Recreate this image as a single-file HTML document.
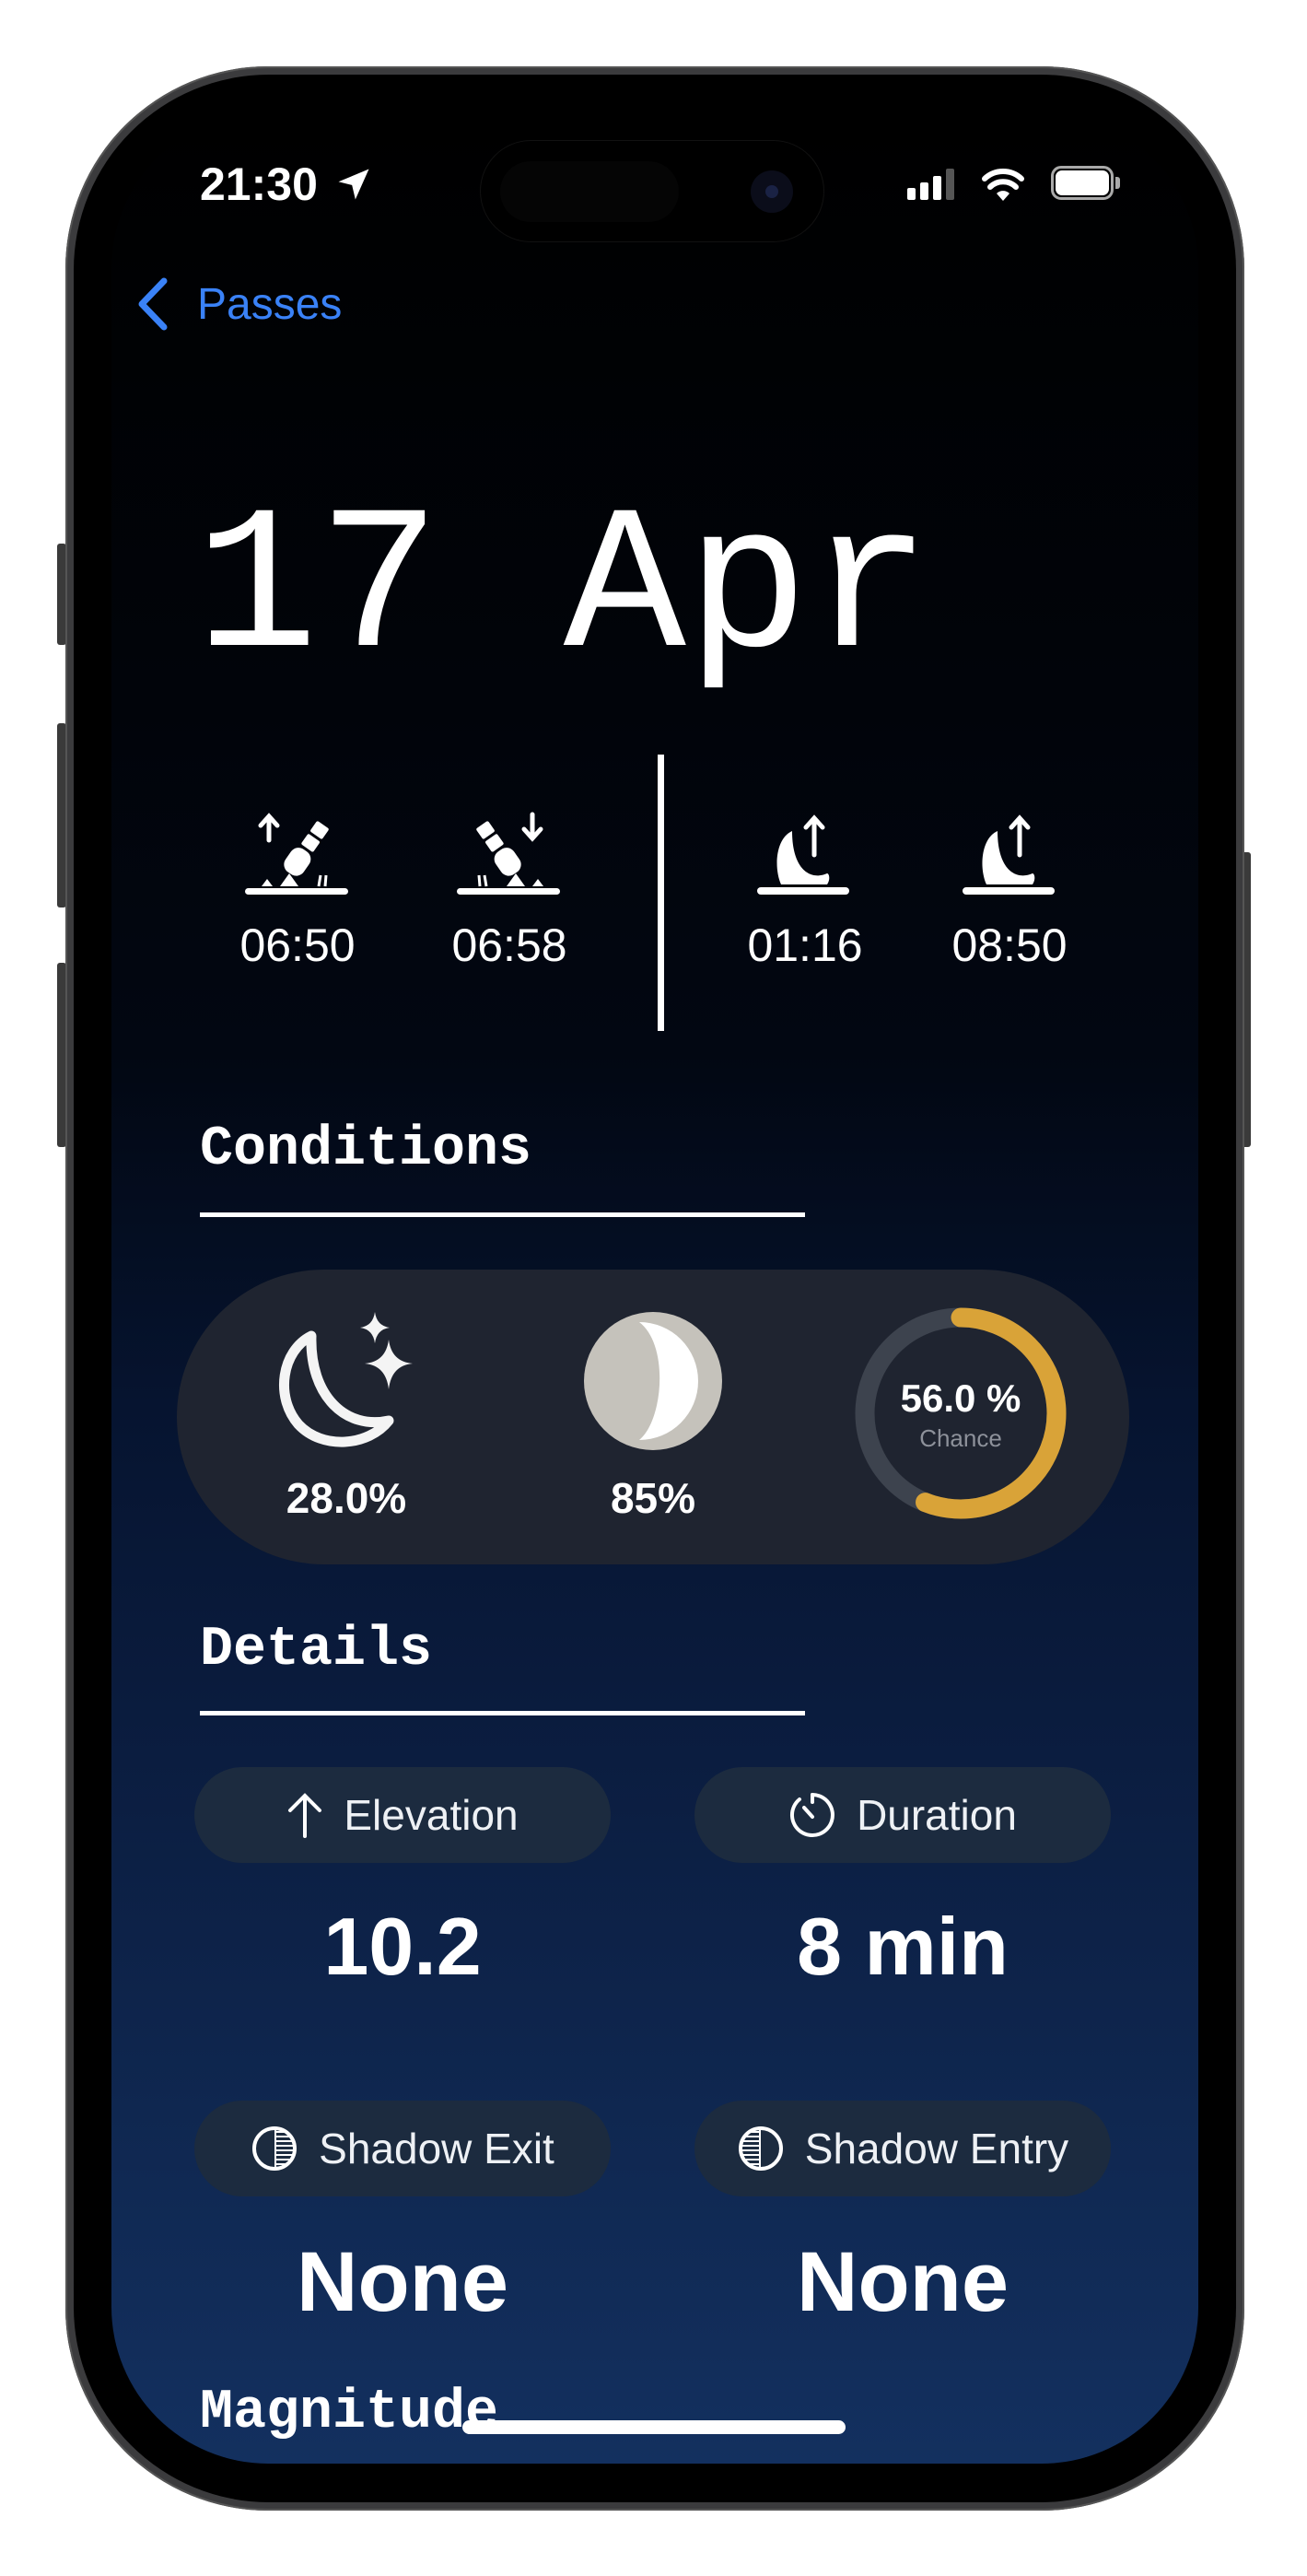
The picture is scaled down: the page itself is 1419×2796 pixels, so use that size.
<!DOCTYPE html>
<html><head><meta charset="utf-8">
<style>
*{margin:0;padding:0;box-sizing:border-box}
html,body{width:1419px;height:2796px;background:#fff;overflow:hidden;position:relative;font-family:"Liberation Sans",sans-serif}
.abs{position:absolute}
.frame{left:71px;top:72px;width:1280px;height:2653px;border-radius:220px;background:#3b3b3d;box-shadow:inset 0 0 0 2px #555}
.bezel{left:80px;top:81px;width:1262px;height:2635px;border-radius:212px;background:#000}
.screen{left:121px;top:121px;width:1180px;height:2553px;border-radius:170px;overflow:hidden;
background:linear-gradient(180deg,#000 0%,#01040a 25%,#020712 40%,#061430 55%,#0b1d40 70%,#0f2750 85%,#13305f 100%)}
.t{position:absolute;color:#fff;white-space:nowrap;line-height:1}
.mono{font-family:"Liberation Mono",monospace}
.ctr{transform:translateX(-50%);text-align:center}
.pill{position:absolute;width:452px;height:104px;border-radius:52px;background:#1c2b3f;display:flex;align-items:center;justify-content:center;gap:22px;color:#eef1f5;font-size:46px}
.line{position:absolute;background:#fff}
</style></head><body>
<div class="abs" style="left:62px;top:590px;width:10px;height:110px;background:#3a3a3a;border-radius:3px"></div>
<div class="abs" style="left:62px;top:785px;width:10px;height:200px;background:#3a3a3a;border-radius:3px"></div>
<div class="abs" style="left:62px;top:1045px;width:10px;height:200px;background:#3a3a3a;border-radius:3px"></div>
<div class="abs" style="left:1348px;top:925px;width:10px;height:320px;background:#3a3a3a;border-radius:3px"></div>
<div class="abs frame"></div>
<div class="abs bezel"></div>
<div class="abs screen"></div>

<div class="t" style="left:217px;top:175px;font-size:50px;font-weight:bold">21:30</div>
<svg class="abs" style="left:362px;top:178px" width="44" height="44" viewBox="0 0 24 24"><path d="M21 3 L3 10.5 L11 12.5 L13 21 Z" fill="#fff"/></svg>
<div class="abs" style="left:522px;top:153px;width:372px;height:109px;border-radius:55px;background:#000;box-shadow:0 0 0 1px #111"></div>
<div class="abs" style="left:543px;top:175px;width:194px;height:66px;border-radius:33px;background:#050505"></div>
<div class="abs" style="left:815px;top:185px;width:46px;height:46px;border-radius:23px;background:#0b0d1a"></div>
<div class="abs" style="left:831px;top:201px;width:14px;height:14px;border-radius:7px;background:#1a2244"></div>
<div class="abs" style="left:985px;top:204px;width:9px;height:13px;background:#fff;border-radius:2px"></div>
<div class="abs" style="left:999px;top:198px;width:9px;height:19px;background:#fff;border-radius:2px"></div>
<div class="abs" style="left:1013px;top:191px;width:9px;height:26px;background:#fff;border-radius:2px"></div>
<div class="abs" style="left:1027px;top:183px;width:9px;height:34px;background:#555;border-radius:2px"></div>
<svg class="abs" style="left:1066px;top:180px" width="46" height="40" viewBox="0 0 46 40"><path d="M23 38 L30 30 A10 10 0 0 0 16 30 Z" fill="#fff"/><path d="M9 23 A20 20 0 0 1 37 23" stroke="#fff" stroke-width="6" fill="none" stroke-linecap="round"/><path d="M3 14 A29 29 0 0 1 43 14" stroke="#fff" stroke-width="6" fill="none" stroke-linecap="round"/></svg>
<div class="abs" style="left:1141px;top:180px;width:68px;height:37px;border:3px solid #aaa;border-radius:11px"></div>
<div class="abs" style="left:1146px;top:185px;width:58px;height:27px;background:#fff;border-radius:7px"></div>
<div class="abs" style="left:1211px;top:192px;width:5px;height:13px;background:#aaa;border-radius:0 3px 3px 0"></div>

<svg class="abs" style="left:146px;top:301px" width="40" height="58" viewBox="0 0 40 58"><path d="M32 4 L8 29 L32 54" stroke="#3a82f7" stroke-width="7" fill="none" stroke-linecap="round" stroke-linejoin="round"/></svg>
<div class="t" style="left:214px;top:307px;font-size:48px;color:#3a82f7">Passes</div>

<div class="t mono" style="left:212px;top:530px;font-size:222px">17 Apr</div>

<svg class="abs" style="left:262px;top:880px" width="120" height="92" viewBox="0 0 120 92">
<path d="M30 6 L30 32 M21 16 L30 6 L39 16" stroke="#fff" stroke-width="5" fill="none" stroke-linecap="round"/>
<g transform="rotate(35 66 48)" fill="#fff"><rect x="58" y="8" width="16" height="14" rx="2"/><rect x="58" y="25" width="16" height="14" rx="2"/><rect x="54" y="42" width="24" height="30" rx="10"/></g>
<path d="M42 82 L52 68 L62 82 Z M22 82 L28 74 L34 82 Z" fill="#fff"/>
<path d="M86 70 L84 82 M92 70 L91 82" stroke="#fff" stroke-width="3"/>
<rect x="4" y="84" width="112" height="7" rx="3.5" fill="#fff"/></svg>
<svg class="abs" style="left:492px;top:880px" width="120" height="92" viewBox="0 0 120 92">
<path d="M86 4 L86 30 M77 20 L86 30 L95 20" stroke="#fff" stroke-width="5" fill="none" stroke-linecap="round"/>
<g transform="rotate(-35 54 48)" fill="#fff"><rect x="46" y="8" width="16" height="14" rx="2"/><rect x="46" y="25" width="16" height="14" rx="2"/><rect x="42" y="42" width="24" height="30" rx="10"/></g>
<path d="M58 82 L68 68 L78 82 Z M86 82 L92 74 L98 82 Z" fill="#fff"/>
<path d="M34 70 L36 82 M28 70 L29 82" stroke="#fff" stroke-width="3"/>
<rect x="4" y="84" width="112" height="7" rx="3.5" fill="#fff"/></svg>
<svg class="abs" style="left:820px;top:880px" width="104" height="92" viewBox="0 0 104 92">
<path d="M64 8 L64 48 M55 18 L64 8 L73 18" stroke="#fff" stroke-width="5" fill="none" stroke-linecap="round"/>
<path d="M40 22 C22 30 20 62 28 80 L78 80 C82 74 80 68 78 68 C60 76 40 64 40 22 Z" fill="#fff"/>
<rect x="2" y="83" width="100" height="8" rx="4" fill="#fff"/></svg>
<svg class="abs" style="left:1043px;top:880px" width="104" height="92" viewBox="0 0 104 92">
<path d="M64 8 L64 48 M55 18 L64 8 L73 18" stroke="#fff" stroke-width="5" fill="none" stroke-linecap="round"/>
<path d="M40 22 C22 30 20 62 28 80 L78 80 C82 74 80 68 78 68 C60 76 40 64 40 22 Z" fill="#fff"/>
<rect x="2" y="83" width="100" height="8" rx="4" fill="#fff"/></svg>
<div class="t ctr" style="left:323px;top:1001px;font-size:50px">06:50</div>
<div class="t ctr" style="left:553px;top:1001px;font-size:50px">06:58</div>
<div class="t ctr" style="left:874px;top:1001px;font-size:50px">01:16</div>
<div class="t ctr" style="left:1096px;top:1001px;font-size:50px">08:50</div>
<div class="line" style="left:714px;top:819px;width:7px;height:300px"></div>

<div class="t mono" style="left:217px;top:1218px;font-size:60px;font-weight:bold">Conditions</div>
<div class="line" style="left:217px;top:1316px;width:657px;height:5px"></div>
<div class="abs" style="left:192px;top:1378px;width:1034px;height:320px;border-radius:160px;background:#1f2430"></div>
<svg class="abs" style="left:300px;top:1420px" width="154" height="158" viewBox="0 0 154 158">
<path d="M38 30 C6 46 -2 96 24 126 C50 154 100 150 122 122 C76 132 36 96 38 30 Z" stroke="#f4f4f4" stroke-width="11" fill="none" stroke-linejoin="round"/>
<path d="M107 4 Q109 19 123 21 Q109 23 107 38 Q105 23 91 21 Q105 19 107 4 Z" fill="#f4f4f4"/>
<path d="M122 34 Q125 58 148 60 Q125 62 122 88 Q119 62 96 60 Q119 58 122 34 Z" fill="#f4f4f4"/>
</svg>
<div class="t ctr" style="left:376px;top:1603px;font-size:46px;font-weight:bold">28.0%</div>
<svg class="abs" style="left:632px;top:1422px" width="154" height="154" viewBox="0 0 154 154">
<circle cx="77" cy="77" r="75" fill="#c5c2bb"/>
<path d="M62 13 A64 64 0 0 1 62 141 C88 120 95 38 62 13 Z" fill="#fff"/>
</svg>
<div class="t ctr" style="left:709px;top:1603px;font-size:46px;font-weight:bold">85%</div>
<svg class="abs" style="left:923px;top:1414px" width="240" height="240" viewBox="0 0 240 240">
<circle cx="120" cy="120" r="104" stroke="#3d434e" stroke-width="21" fill="none"/>
<circle cx="120" cy="120" r="104" stroke="#d9a338" stroke-width="21" fill="none" stroke-linecap="round" stroke-dasharray="366 1000" transform="rotate(-90 120 120)"/>
</svg>
<div class="t ctr" style="left:1043px;top:1497px;font-size:42px;font-weight:bold">56.0 %</div>
<div class="t ctr" style="left:1043px;top:1548px;font-size:26px;color:#8d919a">Chance</div>

<div class="t mono" style="left:217px;top:1761px;font-size:60px;font-weight:bold">Details</div>
<div class="line" style="left:217px;top:1857px;width:657px;height:5px"></div>
<div class="pill" style="left:211px;top:1918px"><svg width="40" height="50" viewBox="0 0 40 50"><path d="M20 48 L20 4 M4 20 L20 4 L36 20" stroke="#fff" stroke-width="4" fill="none" stroke-linecap="round"/></svg><span>Elevation</span></div>
<div class="pill" style="left:754px;top:1918px"><svg width="52" height="52" viewBox="0 0 52 52"><path d="M26 4 A22 22 0 1 1 12 9" stroke="#fff" stroke-width="4" fill="none" stroke-linecap="round"/><path d="M26 4 L26 12 M17 18 L26 28" stroke="#fff" stroke-width="4" stroke-linecap="round"/></svg><span>Duration</span></div>
<div class="t ctr" style="left:437px;top:2069px;font-size:88px;font-weight:bold">10.2</div>
<div class="t ctr" style="left:980px;top:2069px;font-size:88px;font-weight:bold">8 min</div>
<div class="pill" style="left:211px;top:2280px"><svg width="52" height="52" viewBox="0 0 52 52"><circle cx="26" cy="26" r="22" stroke="#fff" stroke-width="4" fill="none"/><path d="M27 8 H40 M27 13 H44 M27 18 H46 M27 23 H47 M27 28 H47 M27 33 H46 M27 38 H44 M27 43 H40" stroke="#fff" stroke-width="2"/><path d="M27 4 V48" stroke="#fff" stroke-width="2"/></svg><span>Shadow Exit</span></div>
<div class="pill" style="left:754px;top:2280px"><svg width="52" height="52" viewBox="0 0 52 52"><circle cx="26" cy="26" r="22" stroke="#fff" stroke-width="4" fill="none"/><path d="M25 8 H12 M25 13 H8 M25 18 H6 M25 23 H5 M25 28 H5 M25 33 H6 M25 38 H8 M25 43 H12" stroke="#fff" stroke-width="2"/><path d="M25 4 V48" stroke="#fff" stroke-width="2"/></svg><span>Shadow Entry</span></div>
<div class="t ctr" style="left:437px;top:2431px;font-size:92px;font-weight:bold">None</div>
<div class="t ctr" style="left:980px;top:2431px;font-size:92px;font-weight:bold">None</div>
<div class="t mono" style="left:217px;top:2589px;font-size:60px;font-weight:bold">Magnitude</div>
<div class="abs" style="left:502px;top:2627px;width:416px;height:15px;border-radius:8px;background:#fff"></div>
</body></html>
